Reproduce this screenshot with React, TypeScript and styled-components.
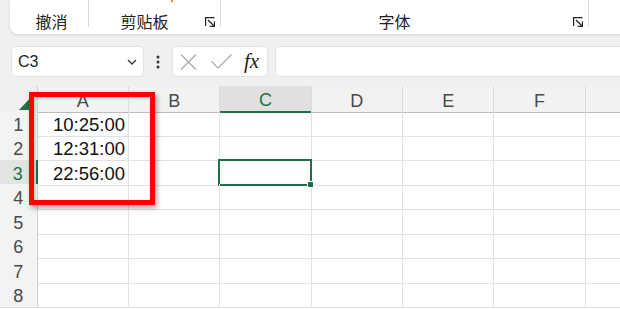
import React from "react";
import styled, { createGlobalStyle } from "styled-components";

const Global = createGlobalStyle`
  html, body { margin: 0; padding: 0; background: #f0f0f0; overflow: hidden; }
  body { font-family: "Liberation Sans", "Noto Sans CJK SC", sans-serif; }
`;

const Page = styled.div`
  position: relative;
  width: 620px;
  height: 309px;
  overflow: hidden;
  background: #f0f0f0;
  display: flex;
  flex-direction: column;
`;

const Ribbon = styled.div`
  margin-left: 10px;
  height: 34px;
  background: #ffffff;
  border-bottom-left-radius: 8px;
  box-shadow: 0 1px 3px rgba(0, 0, 0, 0.12);
  display: flex;
  align-items: flex-start;
  flex-shrink: 0;
`;

const Group = styled.div<{ $w?: number; $pl?: number }>`
  position: relative;
  width: ${(p) => (p.$w ? `${p.$w}px` : "auto")};
  flex: ${(p) => (p.$w ? "none" : "1")};
  height: 27px;
  border-right: ${(p) => (p.$w ? "1px solid #d9d9d9" : "none")};
  display: flex;
  align-items: flex-end;
  padding-left: ${(p) => p.$pl ?? 0}px;
  box-sizing: border-box;
`;

const GroupLabel = styled.div`
  flex: 1;
  text-align: center;
  font-family: "Noto Sans CJK SC", sans-serif;
  font-size: 16px;
  line-height: 16px;
  color: #222;
  margin-bottom: -2px;
`;

const Launcher = styled.span`
  width: 11px;
  height: 10px;
  margin: 0 4px 0 5px;
  display: flex;
`;

const OrangeTick = styled.span`
  position: absolute;
  top: 0;
  left: 82px;
  width: 2px;
  height: 2px;
  background: #f08a24;
`;

const FormulaRow = styled.div`
  display: flex;
  align-items: center;
  margin-top: 12px;
  height: 31px;
  flex-shrink: 0;
`;

const NameBox = styled.div`
  margin-left: 11px;
  width: 133px;
  height: 31px;
  box-sizing: border-box;
  background: #fff;
  border: 1px solid #e3e3e3;
  border-radius: 5px;
  display: flex;
  align-items: center;
  justify-content: space-between;
  padding: 0 6px 0 6px;
  font-size: 16px;
  color: #222;
`;

const Dots = styled.span`
  width: 28px;
  display: flex;
  justify-content: center;
`;

const FxBox = styled.div`
  width: 96px;
  height: 31px;
  box-sizing: border-box;
  background: #fff;
  border: 1px solid #e3e3e3;
  border-radius: 5px;
  display: flex;
  align-items: center;
  padding-left: 7px;
  gap: 14px;
`;

const Fx = styled.span`
  font-family: "Liberation Serif", "DejaVu Serif", serif;
  font-style: italic;
  font-size: 21px;
  color: #222;
  line-height: 1;
  margin-left: -2px;
`;

const FormulaInput = styled.div`
  margin-left: 7px;
  flex: 1;
  height: 31px;
  box-sizing: border-box;
  background: #fff;
  border: 1px solid #e3e3e3;
  border-right: none;
  border-radius: 5px 0 0 5px;
`;

const Sheet = styled.div`
  margin-top: 9px;
  flex: 1;
  background: #fff;
  overflow: hidden;
`;

const cols = "37.7px repeat(7, 91.33px)";

const HeaderRow = styled.div`
  display: grid;
  grid-template-columns: ${cols};
  height: 25px;
`;

const Corner = styled.div`
  background: #efefef;
  border-right: 1px solid #cfcfcf;
  border-bottom: 1px solid #bdbdbd;
  display: flex;
  align-items: flex-end;
  justify-content: flex-end;
  padding: 0 3px 2px 0;
`;

const ColHead = styled.div<{ $sel?: boolean }>`
  background: ${(p) => (p.$sel ? "#e0e0e0" : "#f2f2f2")};
  border-right: 1px solid #dcdcdc;
  border-bottom: ${(p) => (p.$sel ? "2px solid #1e7145" : "1px solid #bdbdbd")};
  color: ${(p) => (p.$sel ? "#1e7145" : "#4a4a4a")};
  font-size: 18px;
  display: flex;
  align-items: center;
  justify-content: center;
  padding-top: 4px;
  box-sizing: border-box;
`;

const Row = styled.div`
  display: grid;
  grid-template-columns: ${cols};
  height: 24.43px;
`;

const RowHead = styled.div<{ $sel?: boolean }>`
  background: ${(p) => (p.$sel ? "#e3e3e3" : "#f3f3f3")};
  border-right: ${(p) => (p.$sel ? "2px solid #1e7145" : "1px solid #cfcfcf")};
  border-bottom: 1px solid #dedede;
  color: ${(p) => (p.$sel ? "#1e7145" : "#4a4a4a")};
  font-size: 18px;
  display: flex;
  align-items: center;
  justify-content: center;
  padding-top: 4px;
  box-sizing: border-box;
`;

const Cell = styled.div<{ $sel?: boolean }>`
  position: relative;
  border-right: 1px solid #e1e1e1;
  border-bottom: 1px solid #e1e1e1;
  font-size: 18.5px;
  color: #111;
  display: flex;
  align-items: flex-end;
  justify-content: flex-end;
  padding-right: 3px;
  line-height: 18px;
  padding-bottom: 2px;
  &::after {
    content: "";
    display: ${(p) => (p.$sel ? "block" : "none")};
    position: absolute;
    left: -2px;
    top: -1px;
    right: -1px;
    bottom: -1px;
    border: 2px solid #1e7145;
  }
`;

const FillHandle = styled.span`
  position: absolute;
  right: -3px;
  bottom: -3px;
  width: 5px;
  height: 5px;
  background: #1e7145;
  border: 1px solid #fff;
  z-index: 2;
`;

const Highlight = styled.div`
  position: absolute;
  left: 29px;
  top: 92px;
  width: 126px;
  height: 113px;
  box-sizing: border-box;
  border: 5px solid #ff0000;
  box-shadow: 2px 3px 5px rgba(0, 0, 0, 0.35), inset 1px 1px 3px rgba(0, 0, 0, 0.25);
  pointer-events: none;
`;

const LauncherIcon = () => (
  <svg width="11" height="10" viewBox="0 0 11 10" fill="none" stroke="#222" strokeWidth="1.2">
    <path d="M0.6 9 V0.6 H9.5" />
    <path d="M3 3 L9.4 9.2" />
    <path d="M9.4 4.6 V9.4 H4.8" />
  </svg>
);

const Chevron = () => (
  <svg width="10" height="6" viewBox="0 0 10 6" fill="none" stroke="#333" strokeWidth="1.3">
    <path d="M1 1 L5 5 L9 1" />
  </svg>
);

const DotsIcon = () => (
  <svg width="4" height="14" viewBox="0 0 4 14" fill="#333">
    <circle cx="2" cy="2" r="1.5" />
    <circle cx="2" cy="7" r="1.5" />
    <circle cx="2" cy="12" r="1.5" />
  </svg>
);

const Cross = () => (
  <svg width="17" height="16" viewBox="0 0 17 16" fill="none" stroke="#a8a8a8" strokeWidth="1.2">
    <path d="M1 0.5 L16 15.5 M16 0.5 L1 15.5" />
  </svg>
);

const Check = () => (
  <svg width="21" height="15" viewBox="0 0 21 15" fill="none" stroke="#a8a8a8" strokeWidth="1.2">
    <path d="M0.5 7.5 L7 14 L20.5 0.5" />
  </svg>
);

const Triangle = () => (
  <svg width="15" height="16" viewBox="0 0 15 16">
    <polygon points="15,0 15,16 0,16" fill="#217346" />
  </svg>
);

const colLetters = ["A", "B", "C", "D", "E", "F", ""];
const data: Record<number, string> = { 1: "10:25:00", 2: "12:31:00", 3: "22:56:00" };

export default function App() {
  return (
    <Page>
      <Global />
      <Ribbon>
        <Group $w={79} $pl={5}>
          <GroupLabel>撤消</GroupLabel>
        </Group>
        <Group $w={132}>
          <OrangeTick />
          <GroupLabel>剪贴板</GroupLabel>
          <Launcher>
            <LauncherIcon />
          </Launcher>
        </Group>
        <Group $w={368}>
          <GroupLabel>字体</GroupLabel>
          <Launcher>
            <LauncherIcon />
          </Launcher>
        </Group>
        <Group />
      </Ribbon>
      <FormulaRow>
        <NameBox>
          <span>C3</span>
          <Chevron />
        </NameBox>
        <Dots>
          <DotsIcon />
        </Dots>
        <FxBox>
          <Cross />
          <Check />
          <Fx>fx</Fx>
        </FxBox>
        <FormulaInput />
      </FormulaRow>
      <Sheet>
        <HeaderRow>
          <Corner>
            <Triangle />
          </Corner>
          {colLetters.map((c, i) => (
            <ColHead key={i} $sel={c === "C"}>
              {c}
            </ColHead>
          ))}
        </HeaderRow>
        {[1, 2, 3, 4, 5, 6, 7, 8].map((r) => (
          <Row key={r}>
            <RowHead $sel={r === 3}>{r}</RowHead>
            {colLetters.map((c, i) => {
              const sel = r === 3 && c === "C";
              return (
                <Cell key={i} $sel={sel}>
                  {c === "A" ? data[r] : null}
                  {sel && <FillHandle />}
                </Cell>
              );
            })}
          </Row>
        ))}
      </Sheet>
      <Highlight />
    </Page>
  );
}
